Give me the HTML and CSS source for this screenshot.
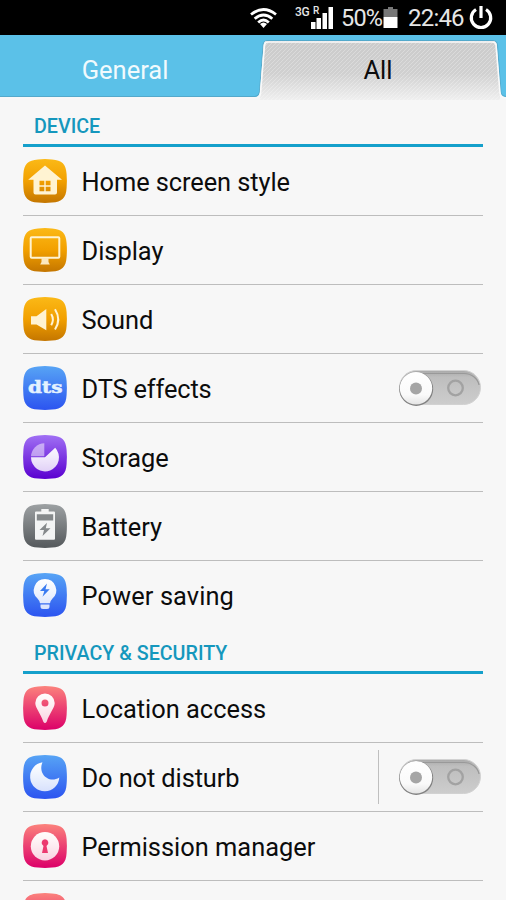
FILE: index.html
```html
<!DOCTYPE html>
<html lang="en">
<head>
<meta charset="utf-8">
<title>Settings</title>
<link rel="stylesheet" href="styles.css">
</head>
<body>
<svg class="defs" width="0" height="0" aria-hidden="true">
  <defs>
    <linearGradient id="orange" x2="0" y2="1"><stop offset="0" stop-color="#fbb917"/><stop offset=".5" stop-color="#f2a000"/><stop offset="1" stop-color="#c47600"/></linearGradient>
    <linearGradient id="blue" x2="0" y2="1"><stop offset="0" stop-color="#57a4f5"/><stop offset="1" stop-color="#2c54f0"/></linearGradient>
    <linearGradient id="purple" x2="0" y2="1"><stop offset="0" stop-color="#a070f4"/><stop offset="1" stop-color="#5a00d0"/></linearGradient>
    <linearGradient id="gray" x2="0" y2="1"><stop offset="0" stop-color="#9da1a3"/><stop offset="1" stop-color="#55595c"/></linearGradient>
    <linearGradient id="pink" x2="0" y2="1"><stop offset="0" stop-color="#fb827c"/><stop offset="1" stop-color="#dc0069"/></linearGradient>
    <linearGradient id="glyph" gradientUnits="userSpaceOnUse" x1="0" y1="6" x2="0" y2="37"><stop offset="0" stop-color="#fff"/><stop offset="1" stop-color="#fff" stop-opacity=".8"/></linearGradient>
    <linearGradient id="tab" x2="0" y2="1"><stop offset="0" stop-color="#cbcbcb"/><stop offset=".55" stop-color="#d0d0d0"/><stop offset="1" stop-color="#efefef"/></linearGradient>
    <pattern id="hatch" width="4" height="4" patternUnits="userSpaceOnUse"><path d="M-1 5L5-1M-1 1L1-1M3 5L5 3" stroke="#fff" stroke-opacity=".35" stroke-width=".8"/></pattern>
    <linearGradient id="track" x2="0" y2="1"><stop offset="0" stop-color="#a9a9a9"/><stop offset=".2" stop-color="#bebebe"/><stop offset="1" stop-color="#cdcdcd"/></linearGradient>
    <linearGradient id="knob" x2="0" y2="1"><stop offset="0" stop-color="#fff"/><stop offset=".7" stop-color="#fafafa"/><stop offset="1" stop-color="#e4e4e4"/></linearGradient>
    <path id="squircle" d="M15 .4Q22-.2 29 .4C39 1 43 5 43.600 15Q44.200 22 43.600 29C43 39 39 43 29 43.600Q22 44.200 15 43.600C5 43 1 39 .4 29Q-.2 22 .4 15C1 5 5 1 15 .4Z"/>
    <g id="toggle">
      <rect x=".5" y=".5" width="81" height="34" rx="17" fill="url(#track)" stroke="#d2d2d2"/>
      <path d="M20 3.500H65C73 3.500 79 9 80 15" fill="none" stroke="#999" stroke-width="1.200"/>
      <circle cx="17.200" cy="18.900" r="17" fill="#808080"/>
      <circle cx="17" cy="18.300" r="16.200" fill="url(#knob)"/>
      <circle cx="17" cy="18.500" r="6" fill="#a5a5a5"/>
      <circle cx="56.500" cy="18" r="7.300" fill="none" stroke="#a2a2a2" stroke-width="2.300"/>
    </g>
  </defs>
</svg>
<main class="screen">
  <header class="status">
    <svg class="wifi" width="27" height="20" viewBox="0 0 27 20" fill="none" stroke="#fff" stroke-width="2.800"><path d="M1 6.500Q13.500-3.500 26 6.500M4.700 10.800Q13.500 3.200 22.300 10.800M8.200 14.500Q13.500 9.500 18.800 14.500"/><path d="M10 16Q13.500 13 17 16L13.500 20Z" fill="#fff" stroke="none"/></svg>
    <span class="net">3G</span>
    <span class="signal"><span class="roam">R</span><svg width="23" height="22" viewBox="0 0 23 22" fill="#fff"><path d="M0 15H4.500V22H0ZM5.500 11H10V22H5.500ZM11.500 6H16V22H11.500ZM17.500 0H22V22H17.500Z"/></svg></span>
    <span class="pct">50%</span>
    <svg class="cell" width="15" height="21" viewBox="0 0 15 21"><path d="M5 0H10V2H14.500V10H.5V2H5Z" fill="#777"/><path d="M.5 10H14.500V21H.5Z" fill="#fff"/></svg>
    <span class="clock">22:46</span>
    <svg class="power" width="24" height="24" viewBox="0 0 24 24" fill="none" stroke="#fff" stroke-width="3.200"><path d="M7 3.500A9.700 9.700 0 1 0 17 3.500M12 0V12"/></svg>
  </header>
  <nav class="tabs">
    <svg class="tabshape" width="506" height="66" viewBox="0 0 506 66">
      <path d="M0 0H506V62H504Q501 62 500.500 58L497 10Q496.500 5.500 493 5.500H267Q263.500 5.500 263 10L259.500 57Q259 62 255 62H0Z" fill="#5bc1e8"/>
      <path d="M0 61.500H255Q259 61 259.500 57L263 10Q263.500 5.500 267 5.500H493Q497 5.500 497.500 10L501 58Q502 61.500 506 61.500" fill="none" stroke="#54a9cb"/>
      <path d="M260 65V59L264 10Q264.500 6 268 6H492Q496 6 496.500 10L500 59V65Z" fill="url(#tab)"/>
      <path d="M260 65V59L264 10Q264.500 6 268 6H492Q496 6 496.500 10L500 59V65Z" fill="url(#hatch)"/>
      <path d="M0 63H256Q260 63 260.500 58L264.500 10Q265 7 268 7H492Q495.500 7 496 10L500 58Q501 63 506 63" fill="none" stroke="#f9f9f9" stroke-width="1.600"/>
    </svg>
    <span class="tab general">General</span>
    <span class="tab all">All</span>
  </nav>
  <section class="group">
    <h2 class="device"><span>DEVICE</span></h2>
    <div class="row"><svg class="icon" viewBox="0 0 44 44"><use href="#squircle" fill="url(#orange)"/><path fill-rule="evenodd" fill="#fff3d2" d="M22 6.600L39 20.700H34V33.500Q34 35.500 32 35.500H12.500Q10.500 35.500 10.500 33.500V20.700H5.200ZM16.500 21.700V26.300H21.300V21.700ZM22.700 21.700V26.300H27.500V21.700ZM16.500 27.700V32.300H21.300V27.700ZM22.700 27.700V32.300H27.500V27.700Z"/></svg><span class="label l-home">Home screen style</span></div>
    <div class="row"><svg class="icon" viewBox="0 0 44 44"><use href="#squircle" fill="url(#orange)"/><rect x="7.700" y="9.200" width="28.600" height="20.600" rx="1" fill="none" stroke="#fff3d2" stroke-width="2"/><path d="M18.500 30H25.500V34L26.800 36.500H17.200L18.500 34Z" fill="#fce8be"/></svg><span class="label">Display</span></div>
    <div class="row"><svg class="icon" viewBox="0 0 44 44"><use href="#squircle" fill="url(#orange)"/><path d="M8 19.300H13.500L23.300 12V33.300L13.500 27.500H8Z" fill="#fff3d2"/><path d="M28.200 17Q31.500 22.500 28.200 28.200M32 12.200Q38.500 22.500 32 32.500" fill="none" stroke="#fff3d2" stroke-width="2"/></svg><span class="label">Sound</span></div>
    <div class="row"><svg class="icon" viewBox="0 0 44 44"><use href="#squircle" fill="url(#blue)"/><text class="dts" x="5" y="27.300" textLength="34.500" lengthAdjust="spacingAndGlyphs">dts</text></svg><span class="label l-dts">DTS effects</span><svg class="toggle" width="83" height="36"><use href="#toggle"/></svg></div>
    <div class="row"><svg class="icon" viewBox="0 0 44 44"><use href="#squircle" fill="url(#purple)"/><path d="M22 22.300L32.200 12.800A14 14 0 1 1 8 22.300Z" fill="url(#glyph)"/><path d="M21.300 21.300H8A13.500 13.500 0 0 1 21.300 8.300Z" fill="#fff" opacity=".5"/></svg><span class="label">Storage</span></div>
    <div class="row"><svg class="icon" viewBox="0 0 44 44"><use href="#squircle" fill="url(#gray)"/><path d="M18.300 5H25.700V7.500H31Q32 7.500 32 8.500V34.700Q32 35.700 31 35.700H13Q12 35.700 12 34.700V8.500Q12 7.500 13 7.500H18.300Z" fill="#f3f4f4"/><path d="M13.800 10.300H30.200V16.500H13.800ZM24 18.800L16.500 26H21L19.500 32L27.500 24.300H22.800Z" fill="#85898b"/></svg><span class="label">Battery</span></div>
    <div class="row last"><svg class="icon" viewBox="0 0 44 44"><use href="#squircle" fill="url(#blue)"/><path d="M22 6A11.200 11.200 0 0 0 14.500 25.500Q16.500 27.500 17 30.300H27Q27.500 27.500 29.500 25.500A11.200 11.200 0 0 0 22 6ZM17.500 31.500H26.500V33.500Q26.500 36 24 36H20Q17.500 36 17.500 33.500Z" fill="url(#glyph)"/><path d="M24 10.500L17 18H21.300L19.500 23.800L26.700 16.200H22.500Z" fill="#397bf1"/></svg><span class="label l-power">Power saving</span></div>
  </section>
  <section class="group">
    <h2 class="privacy"><span>PRIVACY &amp; SECURITY</span></h2>
    <div class="row"><svg class="icon" viewBox="0 0 44 44"><use href="#squircle" fill="url(#pink)"/><path fill-rule="evenodd" d="M22 7.400A9.700 9.700 0 0 1 31.700 17C31.700 22 26 28 23.800 35.500Q22 38.500 20.200 35.500C18 28 12.300 22 12.300 17A9.700 9.700 0 0 1 22 7.400ZM22 13.400A3.500 3.500 0 1 0 22 20.400A3.500 3.500 0 1 0 22 13.400Z" fill="url(#glyph)"/></svg><span class="label">Location access</span></div>
    <div class="row"><svg class="icon" viewBox="0 0 44 44"><use href="#squircle" fill="url(#blue)"/><path d="M19.500 7.300A14.600 14.600 0 1 0 36.300 22.500C26 29 14.500 19 19.500 7.300Z" fill="url(#glyph)"/></svg><span class="label l-dnd">Do not disturb</span><span class="divider"></span><svg class="toggle" width="83" height="36"><use href="#toggle"/></svg></div>
    <div class="row"><svg class="icon" viewBox="0 0 44 44"><use href="#squircle" fill="url(#pink)"/><circle cx="22" cy="22.200" r="14.200" fill="url(#glyph)"/><path d="M22 15.300A3.500 3.500 0 0 1 23.500 21.900L25 29H19L20.500 21.900A3.500 3.500 0 0 1 22 15.300Z" fill="#ec3a70"/></svg><span class="label">Permission manager</span></div>
    <div class="row"><svg class="icon" viewBox="0 0 44 44"><use href="#squircle" fill="url(#pink)"/></svg></div>
  </section>
</main>
</body>
</html>
```
FILE: styles.css
```css
* { box-sizing: border-box; }
body { margin: 0; background: #f7f7f7; font-family: Roboto, "Liberation Sans", sans-serif; color: #0c0c0c; }
.defs { display: block; }
.screen { width: 506px; height: 900px; overflow: hidden; }
.status { height: 35px; background: #000; color: #e6e6e6; display: flex; align-items: center; padding-left: 250px; white-space: nowrap; }
.status svg { display: block; flex: none; }
.wifi { margin-top: 1px; }
.net { width: 16px; margin-left: 18px; font-size: 12px; line-height: 14px; margin-top: -11px; letter-spacing: -.3px; font-weight: 500; }
.signal { position: relative; width: 23px; height: 22px; }
.roam { position: absolute; left: 2px; top: -1px; font-size: 10px; line-height: 10px; font-weight: 500; }
.pct { width: 42px; margin-left: 7px; font-size: 23.500px; letter-spacing: -.8px; padding-top: 1px; }
.clock { width: 58px; margin-left: 10px; font-size: 24px; letter-spacing: -.8px; padding-top: 1px; }
.power { margin-left: 3px; }
.tabs { position: relative; height: 66px; display: flex; background: #f7f7f7; font-size: 25.500px; line-height: 71px; text-align: center; }
.tabshape { position: absolute; left: 0; top: 0; }
.tab { position: relative; white-space: nowrap; }
.general { width: 252px; color: #f1fafd; }
.all { width: 258px; }
.group { padding: 0 23px; }
h2 { margin: 0; border-bottom: 3px solid #15a0cb; padding-left: 11px; color: #1597bd; font-size: 19.700px; font-weight: 500; line-height: 24px; white-space: nowrap; }
.device { height: 46px; padding-top: 14px; }
.privacy { height: 44px; padding-top: 12px; }
.row { height: 69px; display: flex; align-items: center; border-bottom: 1px solid #bdbdbd; }
.last { border-color: transparent; }
.icon { width: 44px; height: 44px; flex: none; margin-right: 14.500px; overflow: visible; }
.label { font-size: 25.400px; line-height: 30px; white-space: nowrap; margin-top: 1px; }
.l-home { letter-spacing: -.07px; }
.l-dts { letter-spacing: -.15px; }
.l-power { letter-spacing: .1px; }
.l-dnd { letter-spacing: -.1px; }
.toggle { display: block; margin-left: auto; margin-right: 1px; margin-bottom: 1px; }
.divider { width: 1px; height: 54px; background: #bfbfbf; margin-left: auto; }
.divider + .toggle { margin-left: 20px; }
.dts { font: bold 16.500px "DejaVu Serif", serif; fill: #e4f2ff; stroke: #e4f2ff; stroke-width: .5px; }
```
